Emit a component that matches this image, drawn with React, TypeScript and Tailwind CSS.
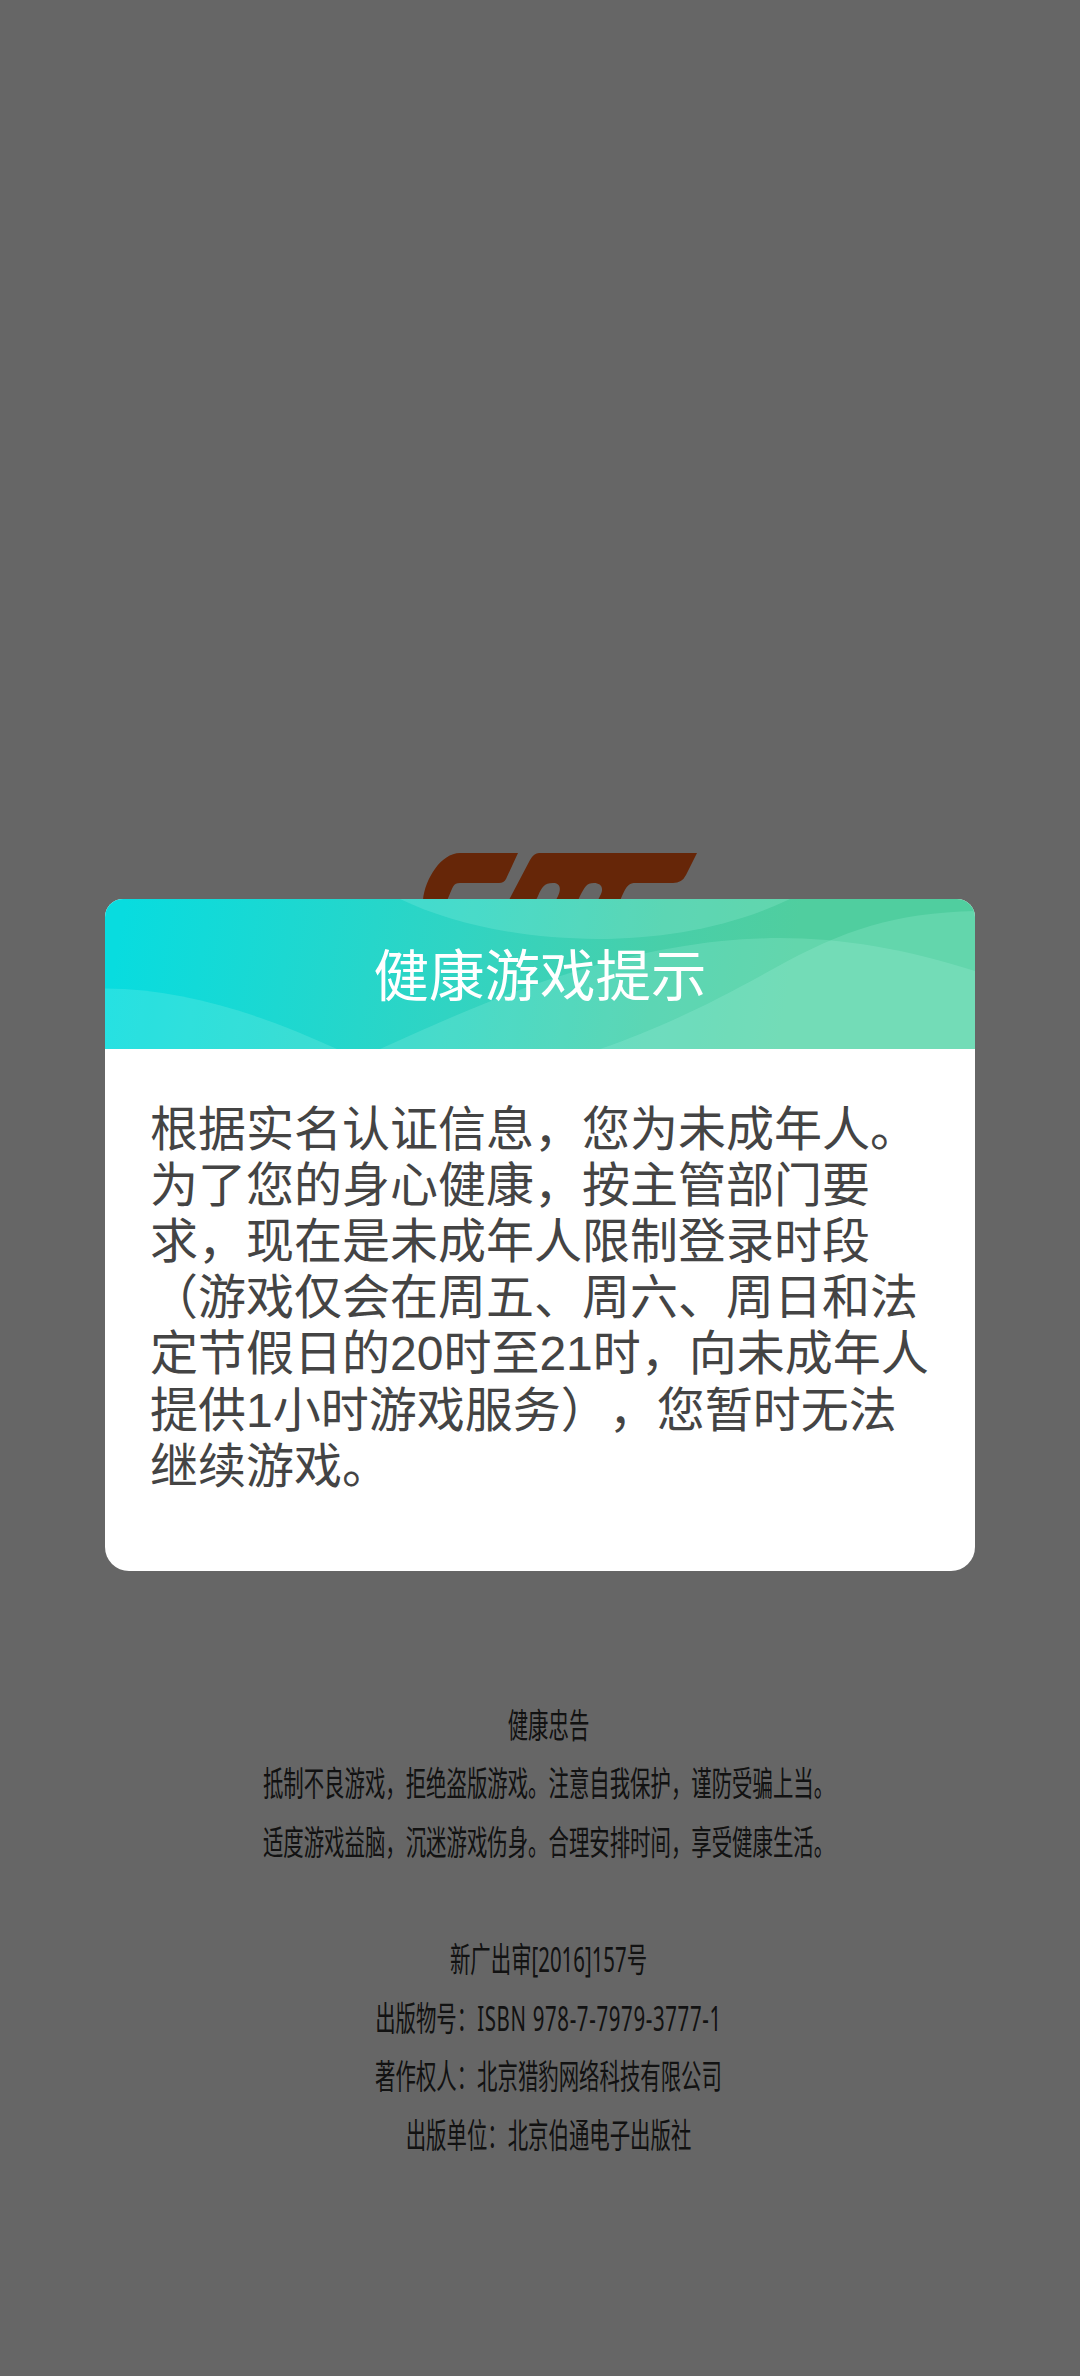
const advice = [
  '健康忠告',
  '抵制不良游戏，拒绝盗版游戏。注意自我保护，谨防受骗上当。',
  '适度游戏益脑，沉迷游戏伤身。合理安排时间，享受健康生活。',
];

const message = [
  '根据实名认证信息，您为未成年人。',
  '为了您的身心健康，按主管部门要',
  '求，现在是未成年人限制登录时段',
  '（游戏仅会在周五、周六、周日和法',
  '定节假日的20时至21时，向未成年人',
  '提供1小时游戏服务），您暂时无法',
  '继续游戏。',
];

const Logo = () => (
  <svg width="290" height="100" viewBox="0 0 290 100" fill="#ff5f14">
    <path d="M101 3H43C24 3 8 29 6 50C3 76 11 90 30 90H65L79 64H40C28 64 27 56 32 46C36 37 36 33 43 33H82Q87 33 89 29Z" />
    <path d="M122 3H280L269 25Q265 33 256 33H219C212 33 210 35 205 46L186 90H161L183 46C188 37 183 33 177 33C169 33 168 37 163 46L142 90H119L141 46C145 37 142 33 136 33C127 33 125 37 121 46L99 90H75L93 48L113 10Q117 3 122 3Z" />
  </svg>
);

const HeaderWaves = () => (
  <svg className="col-start-1 row-start-1" width="870" height="150" viewBox="0 0 870 150">
    <defs>
      <linearGradient id="header" gradientUnits="userSpaceOnUse" x1="20" y1="0" x2="680" y2="110">
        <stop offset="0" stopColor="#08dcdf" />
        <stop offset="0.5" stopColor="#30d4c3" />
        <stop offset="0.8" stopColor="#48cfa9" />
        <stop offset="1" stopColor="#50ce9f" />
      </linearGradient>
    </defs>
    <rect width="870" height="150" fill="url(#header)" />
    <g fill="#c8fff2" fillOpacity="0.16">
      <path d="M0 89.5C80 90 155 115 232 150H0Z" />
      <path d="M275 150C350 116 410 90 468 73C620 28 730 28 870 72V150H275Z" />
      <path d="M495 150C550 131 600 108 668 70C740 30 790 14 870 12V150H495Z" />
      <path d="M295 0C390 46 560 60 685 0Z" />
    </g>
  </svg>
);

const NoticeDialog = () => (
  <div className="w-[870px] h-[672px] bg-white rounded-t-[18px] rounded-b-[24px] overflow-hidden">
    <div className="grid h-[150px] place-items-center">
      <HeaderWaves />
      <h1 className="col-start-1 row-start-1 z-10 pt-[7px] text-white text-[55.5px] leading-[80px]">健康游戏提示</h1>
    </div>
    <p className="pt-[53px] pl-[45px] text-[48px] leading-[56.2px] text-[#444444] whitespace-nowrap">
      {message.map((line) => (
        <span key={line} className="block">{line}</span>
      ))}
    </p>
  </div>
);

const line = 'h-[58.6px] flex items-center justify-center';

const SmallPrint = () => (
  <div className="ml-[17px] flex flex-col gap-[58.6px] scale-x-[0.6] text-[34px] text-[#2e2e2e] whitespace-nowrap font-['Noto_Sans','Noto_Sans_CJK_SC',sans-serif]">
    <div>
      {advice.map((text) => (
        <p key={text} className={line}>{text}</p>
      ))}
    </div>
    <div>
      <p className={line}>新广出审[2016]157号</p>
      <p className={line}>出版物号：<span className="tracking-[1.1px]">ISBN 978-7-7979-3777-1</span></p>
      <p className={line}>著作权人：北京猎豹网络科技有限公司</p>
      <p className={line}>出版单位：北京伯通电子出版社</p>
    </div>
  </div>
);

export default function App() {
  return (
    <div className="relative w-[1080px] h-[2376px] bg-white overflow-hidden font-['Liberation_Sans','Noto_Sans_CJK_SC',sans-serif] [text-spacing-trim:space-all]">
      {/* Splash page */}
      <div className="flex flex-col h-full pt-[850px]">
        <div className="pl-[417px] h-[846px]">
          <Logo />
        </div>
        <SmallPrint />
      </div>

      {/* Modal */}
      <div className="absolute inset-0 bg-black/60 flex flex-col items-center pt-[898.5px]">
        <NoticeDialog />
      </div>
    </div>
  );
}
